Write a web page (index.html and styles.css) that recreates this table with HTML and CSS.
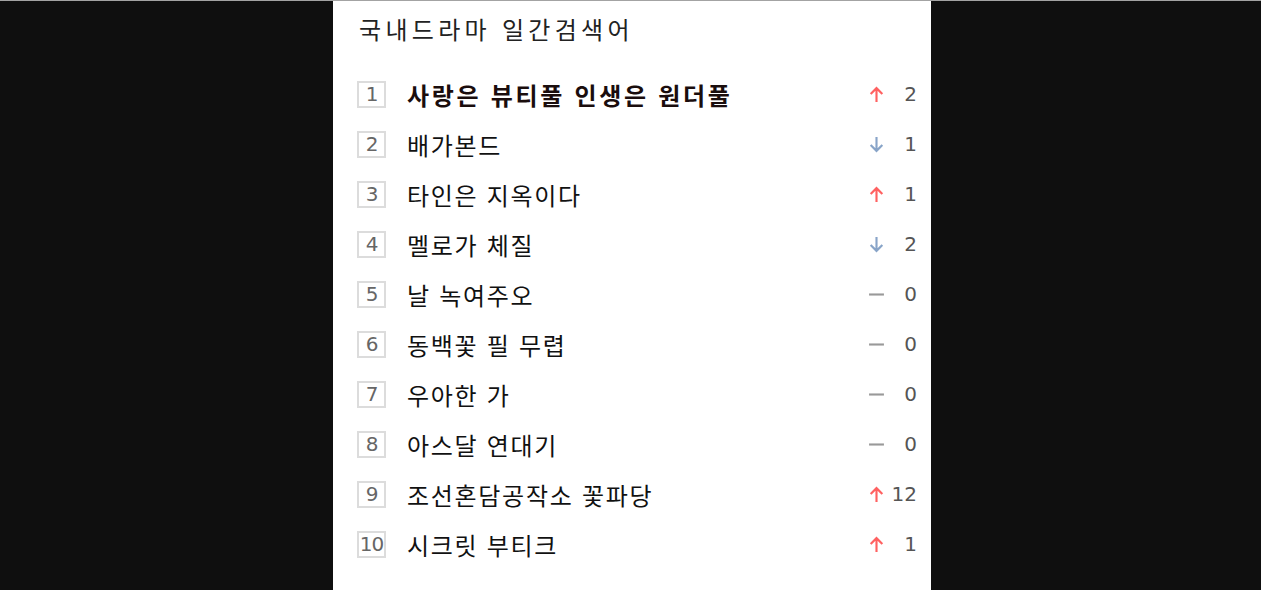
FILE: index.html
```html
<!DOCTYPE html>
<html lang="ko">
<head>
<meta charset="utf-8">
<link rel="stylesheet" href="styles.css">
</head>
<body>
<div class="panel">
  <h2 class="title">국내드라마 일간검색어</h2>
  <ol class="list">
    <li class="row top"><span class="rank">1</span><span class="name">사랑은 뷰티풀 인생은 원더풀</span><span class="change"><svg class="ic up" viewBox="0 0 14 16"><path d="M7 15V2M1.5 7.5L7 2l5.5 5.5"/></svg><span class="num">2</span></span></li>
    <li class="row"><span class="rank">2</span><span class="name">배가본드</span><span class="change"><svg class="ic down" viewBox="0 0 14 16"><path d="M7 1v13M1.5 8.5L7 14l5.5-5.5"/></svg><span class="num">1</span></span></li>
    <li class="row"><span class="rank">3</span><span class="name">타인은 지옥이다</span><span class="change"><svg class="ic up" viewBox="0 0 14 16"><path d="M7 15V2M1.5 7.5L7 2l5.5 5.5"/></svg><span class="num">1</span></span></li>
    <li class="row"><span class="rank">4</span><span class="name">멜로가 체질</span><span class="change"><svg class="ic down" viewBox="0 0 14 16"><path d="M7 1v13M1.5 8.5L7 14l5.5-5.5"/></svg><span class="num">2</span></span></li>
    <li class="row"><span class="rank">5</span><span class="name">날 녹여주오</span><span class="change"><svg class="ic same" viewBox="0 0 14 16"><path d="M0 8h14"/></svg><span class="num">0</span></span></li>
    <li class="row"><span class="rank">6</span><span class="name">동백꽃 필 무렵</span><span class="change"><svg class="ic same" viewBox="0 0 14 16"><path d="M0 8h14"/></svg><span class="num">0</span></span></li>
    <li class="row"><span class="rank">7</span><span class="name">우아한 가</span><span class="change"><svg class="ic same" viewBox="0 0 14 16"><path d="M0 8h14"/></svg><span class="num">0</span></span></li>
    <li class="row"><span class="rank">8</span><span class="name">아스달 연대기</span><span class="change"><svg class="ic same" viewBox="0 0 14 16"><path d="M0 8h14"/></svg><span class="num">0</span></span></li>
    <li class="row"><span class="rank">9</span><span class="name">조선혼담공작소 꽃파당</span><span class="change"><svg class="ic up" viewBox="0 0 14 16"><path d="M7 15V2M1.5 7.5L7 2l5.5 5.5"/></svg><span class="num">12</span></span></li>
    <li class="row"><span class="rank">10</span><span class="name">시크릿 부티크</span><span class="change"><svg class="ic up" viewBox="0 0 14 16"><path d="M7 15V2M1.5 7.5L7 2l5.5 5.5"/></svg><span class="num">1</span></span></li>
  </ol>
</div>
</body>
</html>
```

FILE: styles.css
```css
html, body {
  margin: 0;
  padding: 0;
  height: 100%;
}
body {
  background: #0f0f0f;
  border-top: 1px solid #a3a3a3;
  box-sizing: border-box;
  font-family: "Noto Sans CJK KR", "Noto Sans", sans-serif;
}
.panel {
  width: 598px;
  min-height: 589px;
  margin-left: 333px;
  background: #fff;
  box-sizing: border-box;
  padding: 0 14px 0 24px;
}
.title {
  margin: 0;
  height: 68px;
  display: flex;
  align-items: center;
  padding-left: 2px;
  padding-bottom: 14px;
  box-sizing: border-box;
  font-size: 24px;
  font-weight: normal;
  color: #222;
  letter-spacing: 4.3px;
}
.list {
  list-style: none;
  margin: 0;
  padding: 0;
}
.row {
  height: 50px;
  display: flex;
  align-items: center;
}
.rank {
  width: 29px;
  height: 27px;
  box-sizing: border-box;
  border: 2px solid #dcdcdc;
  display: flex;
  align-items: center;
  justify-content: center;
  font-family: "DejaVu Sans", sans-serif;
  font-size: 20px;
  color: #666;
  letter-spacing: -1px;
}
.name {
  flex: 1;
  margin-left: 21px;
  font-size: 24px;
  letter-spacing: 1.7px;
  color: #111;
}
.top .name {
  font-weight: bold;
  letter-spacing: 2.7px;
  color: #1a0d0d;
}
.change {
  display: flex;
  align-items: center;
}
.ic {
  width: 15px;
  height: 17px;
  fill: none;
  stroke-width: 2;
}
.up { stroke: #ff6161; }
.down { stroke: #88a4c8; }
.same { stroke: #999; }
.num {
  width: 33px;
  text-align: right;
  font-family: "DejaVu Sans", sans-serif;
  font-size: 20px;
  color: #555;
}
```
